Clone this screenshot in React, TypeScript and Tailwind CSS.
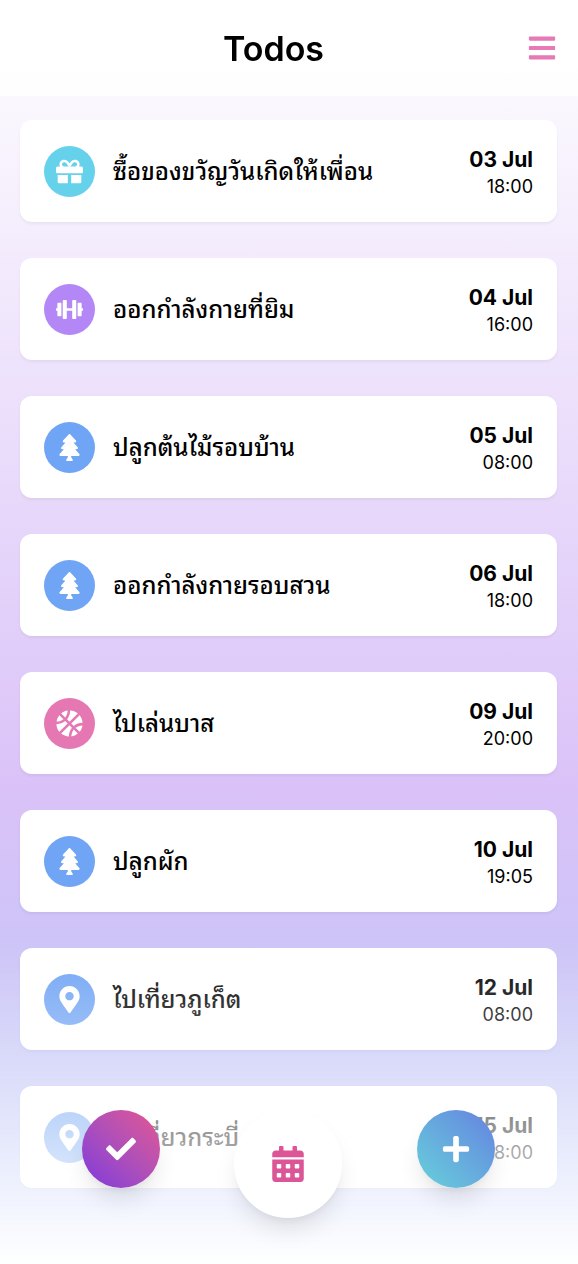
import {
  FaBars,
  FaBasketballBall,
  FaCalendarAlt,
  FaCheck,
  FaDumbbell,
  FaGift,
  FaMapMarkerAlt,
  FaPlus,
  FaTree,
} from "react-icons/fa";
import type { IconType } from "react-icons";

type Todo = {
  title: string;
  date: string;
  time: string;
  icon: IconType;
  color: string;
};

const todos: Todo[] = [
  { title: "ซื้อของขวัญวันเกิดให้เพื่อน", date: "03 Jul", time: "18:00", icon: FaGift, color: "bg-[#66d1eb]" },
  { title: "ออกกำลังกายที่ยิม", date: "04 Jul", time: "16:00", icon: FaDumbbell, color: "bg-[#b388f6]" },
  { title: "ปลูกต้นไม้รอบบ้าน", date: "05 Jul", time: "08:00", icon: FaTree, color: "bg-[#70a4f4]" },
  { title: "ออกกำลังกายรอบสวน", date: "06 Jul", time: "18:00", icon: FaTree, color: "bg-[#70a4f4]" },
  { title: "ไปเล่นบาส", date: "09 Jul", time: "20:00", icon: FaBasketballBall, color: "bg-[#e578b3]" },
  { title: "ปลูกผัก", date: "10 Jul", time: "19:05", icon: FaTree, color: "bg-[#70a4f4]" },
  { title: "ไปเที่ยวภูเก็ต", date: "12 Jul", time: "08:00", icon: FaMapMarkerAlt, color: "bg-[#70a4f4]" },
  { title: "ไปเที่ยวกระบี่", date: "15 Jul", time: "08:00", icon: FaMapMarkerAlt, color: "bg-[#70a4f4]" },
];

function TodoCard({ title, date, time, icon: Icon, color }: Todo) {
  return (
    <li className="flex h-[102px] items-center rounded-xl bg-white px-6 shadow-[0_2px_3px_rgba(0,0,0,0.05)]">
      <span className={`flex size-[51px] shrink-0 items-center justify-center rounded-full text-white ${color}`}>
        <Icon size={27} aria-hidden />
      </span>
      <h2 className="ml-[18px] flex-1 pt-0.5 text-2xl leading-9 font-medium">{title}</h2>
      <div className="pt-1 text-right">
        <p className="text-[21px] leading-[27px] font-bold">{date}</p>
        <p className="text-lg leading-[27px]">{time}</p>
      </div>
    </li>
  );
}

export default function App() {
  return (
    <div className="min-h-screen bg-[linear-gradient(to_bottom,#ffffff_0,#dac2f8_790px,#b3c7f6_1264px)] font-['Inter','Noto_Sans_Thai_Looped','Noto_Sans_Thai',sans-serif] text-black">
      <header className="fixed inset-x-0 top-0 z-20 flex h-24 items-center bg-linear-to-b from-white to-white/80 pr-[21px] pl-5">
        <h1 className="flex-1 pt-0.5 text-center text-[34px] leading-10 font-semibold">Todos</h1>
        <button type="button" aria-label="Menu" className="text-[#e57ab6]">
          <FaBars size={30} />
        </button>
      </header>

      <main className="pt-30 pr-[21px] pb-19 pl-5">
        <ul className="flex flex-col gap-9">
          {todos.map((todo) => (
            <TodoCard key={todo.title} {...todo} />
          ))}
        </ul>
      </main>

      <div className="pointer-events-none fixed inset-x-0 bottom-0 z-10 h-[328px] bg-linear-to-b from-white/0 to-white" />

      <nav className="fixed inset-x-0 bottom-0 z-20 grid grid-cols-3 items-start justify-items-center pr-[38px] pb-[46px] pl-[37px] text-white">
        <button
          type="button"
          aria-label="Completed"
          className="flex size-[78px] items-center justify-center rounded-full bg-linear-to-tr from-[#7f35dc] to-[#e45590] shadow-[0_15px_23px_-4px_rgba(0,0,0,0.1),0_6px_9px_-3px_rgba(0,0,0,0.05)]"
        >
          <FaCheck size={30} />
        </button>
        <button
          type="button"
          aria-label="Calendar"
          className="flex size-27 items-center justify-center rounded-full bg-white text-[#dc5597] shadow-[0_15px_23px_-4px_rgba(0,0,0,0.1),0_6px_9px_-3px_rgba(0,0,0,0.05)]"
        >
          <FaCalendarAlt size={36} />
        </button>
        <button
          type="button"
          aria-label="Add todo"
          className="flex size-[78px] items-center justify-center rounded-full bg-linear-to-tr from-[#66d1d9] to-[#6581e0] shadow-[0_15px_23px_-4px_rgba(0,0,0,0.1),0_6px_9px_-3px_rgba(0,0,0,0.05)]"
        >
          <FaPlus size={30} />
        </button>
      </nav>
    </div>
  );
}
